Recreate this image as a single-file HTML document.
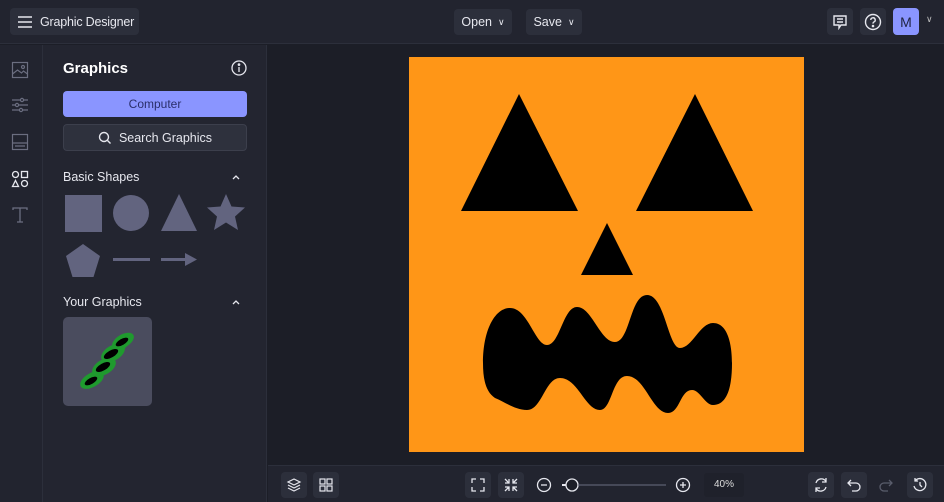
<!DOCTYPE html>
<html><head><style>
*{margin:0;padding:0;box-sizing:border-box}
body{width:944px;height:502px;background:#1c1e27;font-family:"Liberation Sans",sans-serif;color:#e6e7ee;position:relative;overflow:hidden}
.abs{position:absolute;white-space:nowrap}
.top{left:0;top:0;width:944px;height:44px;background:#22242f;border-bottom:1px solid #2c2f3b}
.btn{position:absolute;background:#2c2f3b;border-radius:4px;font-size:12.5px;color:#e6e7ee;display:flex;align-items:center;justify-content:center;white-space:nowrap}
.rail{left:0;top:45px;width:43px;height:457px;background:#22242f;border-right:1px solid #2c2f3b}
.panel{left:43px;top:45px;width:224px;height:457px;background:#232530;border-right:1px solid #2c2f3b}
.bot{left:268px;top:465px;width:676px;height:37px;background:#22242f;border-top:1px solid #2c2f3b}
.ib{position:absolute;width:26px;height:26px;background:#2c2f3b;border-radius:4px;display:flex;align-items:center;justify-content:center}
</style></head><body>
<div class="abs top"></div>
<div class="btn" style="left:10px;top:8px;width:129px;height:27px;justify-content:flex-start;padding-left:7px">
<svg width="16" height="14" viewBox="0 0 16 14" stroke="#e6e7ee" stroke-width="1.6"><path d="M1 2h14M1 7h14M1 12h14"/></svg><span style="margin-left:7px;letter-spacing:-0.2px">Graphic Designer</span></div>
<div class="btn" style="left:454px;top:9px;width:58px;height:26px">Open <span style="font-size:9px;margin-left:6px">&#8744;</span></div>
<div class="btn" style="left:526px;top:9px;width:56px;height:26px">Save <span style="font-size:9px;margin-left:6px">&#8744;</span></div>
<div class="btn" style="left:827px;top:8px;width:26px;height:27px"><svg width="16" height="16" viewBox="0 0 16 16" fill="none" stroke="#e6e7ee" stroke-width="1.4"><path d="M2 2h12v9H9l-2 3v-3H2z M5 5h6M5 8h6"/></svg></div>
<div class="btn" style="left:860px;top:8px;width:26px;height:27px"><svg width="18" height="18" viewBox="0 0 18 18" fill="none" stroke="#e6e7ee" stroke-width="1.4"><circle cx="9" cy="9" r="7.5"/><path d="M6.8 7a2.2 2.2 0 1 1 3 2c-.7.3-.8.8-.8 1.6"/><circle cx="9" cy="13" r=".6" fill="#e6e7ee"/></svg></div>
<div class="btn" style="left:893px;top:8px;width:26px;height:27px;background:#8a95ff;color:#1f2240;font-size:14px">M</div>
<div class="abs" style="left:926px;top:14px;font-size:9px;color:#bbb">&#8744;</div>

<div class="abs rail"></div>
<svg class="abs" style="left:11px;top:61px" width="18" height="18" viewBox="0 0 18 18" fill="none" stroke="#6b6e80" stroke-width="1.2"><rect x="1.5" y="1.5" width="15" height="15"/><path d="M1.5 13l5-4 4 3 2-2 4 3"/><circle cx="12" cy="6" r="1.5"/></svg>
<svg class="abs" style="left:11px;top:96px" width="18" height="18" viewBox="0 0 18 18" fill="none" stroke="#6b6e80" stroke-width="1.2"><path d="M1 4h16M1 9h16M1 14h16"/><circle cx="11" cy="4" r="1.6" fill="#22242f"/><circle cx="6" cy="9" r="1.6" fill="#22242f"/><circle cx="10" cy="14" r="1.6" fill="#22242f"/></svg>
<svg class="abs" style="left:11px;top:133px" width="18" height="18" viewBox="0 0 18 18" fill="none" stroke="#6b6e80" stroke-width="1.2"><rect x="1.5" y="1.5" width="15" height="15"/><path d="M1.5 10h15M4 13h10"/></svg>
<svg class="abs" style="left:11px;top:170px" width="18" height="18" viewBox="0 0 18 18" fill="none" stroke="#e6e7ee" stroke-width="1.3"><circle cx="4.5" cy="4.5" r="3"/><rect x="10.5" y="1.5" width="6" height="6"/><path d="M4.5 10.5l3 6h-6z"/><circle cx="13.5" cy="13.5" r="3"/></svg>
<svg class="abs" style="left:11px;top:206px" width="18" height="18" viewBox="0 0 18 18" fill="none" stroke="#6b6e80" stroke-width="1.3"><path d="M2 4V2h14v2M9 2v14M6 16h6"/></svg>

<div class="abs panel"></div>
<div class="abs" style="left:63px;top:60px;font-size:15px;font-weight:bold;color:#fff">Graphics</div>
<svg class="abs" style="left:231px;top:60px" width="16" height="16" viewBox="0 0 16 16" fill="none" stroke="#e6e7ee" stroke-width="1.3"><circle cx="8" cy="8" r="7"/><path d="M8 7v5"/><circle cx="8" cy="4.6" r=".7" fill="#e6e7ee"/></svg>
<div class="btn" style="left:63px;top:91px;width:184px;height:26px;background:#8a95ff;color:#2a2f6a;font-size:12px">Computer</div>
<div class="btn" style="left:63px;top:124px;width:184px;height:27px;background:#2e313d;border:1px solid #3c3f4c;font-size:12.5px"><svg width="14" height="14" viewBox="0 0 14 14" fill="none" stroke="#e6e7ee" stroke-width="1.4"><circle cx="6" cy="6" r="4.5"/><path d="M9.5 9.5l3 3"/></svg><span style="margin-left:7px">Search Graphics</span></div>
<div class="abs" style="left:63px;top:170px;font-size:12.5px">Basic Shapes</div>
<svg class="abs" style="left:231px;top:173px" width="10" height="8" fill="none" stroke="#e6e7ee" stroke-width="1.3"><path d="M2 6l3-3 3 3"/></svg>
<svg class="abs" style="left:63px;top:192px" width="190" height="90" fill="#62647f">
<rect x="2" y="3" width="37" height="37"/>
<circle cx="68" cy="21" r="18"/>
<path d="M116 2l18 37h-36z"/>
<path d="M163 2l5.5 12.5 13.5 1-10 9 3 13.5-12-7.5-12 7.5 3-13.5-10-9 13.5-1z"/>
<path d="M20 52l17 12-6.5 21h-21L3 64z"/>
<rect x="50" y="66" width="37" height="3"/>
<rect x="98" y="66" width="25" height="3"/><path d="M122 61l12 6.5-12 6.5z"/>
</svg>
<div class="abs" style="left:63px;top:295px;font-size:12.5px">Your Graphics</div>
<svg class="abs" style="left:231px;top:298px" width="10" height="8" fill="none" stroke="#e6e7ee" stroke-width="1.3"><path d="M2 6l3-3 3 3"/></svg>
<div class="abs" style="left:63px;top:317px;width:89px;height:89px;background:#4a4c5e;border-radius:5px"></div>
<svg class="abs" style="left:63px;top:317px" width="89" height="89"><g fill="#1f9a2e">
<path d="M25 68L64 22" stroke="#1f9a2e" stroke-width="9"/>
<ellipse cx="29" cy="63" rx="13" ry="7" transform="rotate(-30 29 63)"/>
<ellipse cx="41" cy="50" rx="13" ry="7.5" transform="rotate(-30 41 50)"/>
<ellipse cx="50" cy="36" rx="13" ry="7.5" transform="rotate(-30 50 36)"/>
<ellipse cx="60" cy="24" rx="12" ry="6.5" transform="rotate(-30 60 24)"/></g>
<ellipse cx="59" cy="25" rx="7" ry="3" fill="#000" transform="rotate(-30 59 25)"/>
<ellipse cx="48" cy="37" rx="8" ry="3.5" fill="#000" transform="rotate(-30 48 37)"/>
<ellipse cx="40" cy="50" rx="8" ry="3.5" fill="#000" transform="rotate(-30 40 50)"/>
<ellipse cx="28" cy="64" rx="7" ry="3" fill="#000" transform="rotate(-30 28 64)"/></svg>

<svg class="abs" style="left:0;top:0" width="944" height="502">
<rect x="409" y="57" width="395" height="395" fill="#ff9617"/>
<path d="M519 94L578 211H461z M695 94L753 211H636z M607 223L633 275H581z" fill="#000"/>
<path d="M483 363C483 330 495 308 510 308C528 308 535 345 547 345C560 345 563 307 577 307C592 307 600 342 615 342C630 342 630 295 647 295C665 295 668 348 680 348C692 348 700 323 713 323C728 323 732 345 732 363C732 385 728 405 713 405C705 405 700 390 692 390C680 390 680 413 668 413C652 413 645 376 627 376C612 376 612 410 600 410C585 410 578 378 560 378C545 378 542 410 527 410C515 410 505 402 495 398C486 392 483 380 483 363Z" fill="#000"/>
</svg>

<div class="abs bot"></div>
<div class="ib" style="left:281px;top:472px"><svg width="16" height="16" viewBox="0 0 16 16" fill="none" stroke="#e6e7ee" stroke-width="1.2"><path d="M8 2l6 3-6 3-6-3z M2 8l6 3 6-3 M2 11l6 3 6-3"/></svg></div>
<div class="ib" style="left:313px;top:472px"><svg width="14" height="14" viewBox="0 0 14 14" fill="none" stroke="#e6e7ee" stroke-width="1.2"><rect x="1" y="1" width="5" height="5"/><rect x="8" y="1" width="5" height="5"/><rect x="1" y="8" width="5" height="5"/><rect x="8" y="8" width="5" height="5"/></svg></div>
<div class="ib" style="left:465px;top:472px"><svg width="14" height="14" viewBox="0 0 14 14" fill="none" stroke="#e6e7ee" stroke-width="1.3"><path d="M1 5V1h4M9 1h4v4M13 9v4H9M5 13H1V9"/></svg></div>
<div class="ib" style="left:498px;top:472px"><svg width="14" height="14" viewBox="0 0 14 14" fill="none" stroke="#e6e7ee" stroke-width="1.3"><path d="M1 5h4V1M5 5L1 1M9 1v4h4M9 5l4-4M13 9H9v4M9 9l4 4M1 9h4v4M5 9l-4 4"/></svg></div>
<svg class="abs" style="left:536px;top:477px" width="160" height="16" fill="none" stroke="#e6e7ee" stroke-width="1.3"><circle cx="8" cy="8" r="6.5"/><path d="M5 8h6"/><path d="M26 8h8" stroke-width="2"/><circle cx="36" cy="8" r="6" fill="#1c1e27"/><path d="M42 8h88" stroke="#6b6e80" stroke-width="1"/><circle cx="147" cy="8" r="6.5"/><path d="M144 8h6M147 5v6"/></svg>
<div class="abs" style="left:704px;top:473px;width:40px;height:24px;background:#1f212b;border-radius:3px;font-size:10px;line-height:24px;text-align:center;color:#ddd">40%</div>
<div class="ib" style="left:808px;top:472px"><svg width="16" height="16" viewBox="0 0 16 16" fill="none" stroke="#e6e7ee" stroke-width="1.3"><path d="M3 6a5.5 5.5 0 0 1 10-1.5M13 10a5.5 5.5 0 0 1-10 1.5M13 1v4H9M3 15v-4h4"/></svg></div>
<div class="ib" style="left:841px;top:472px"><svg width="16" height="16" viewBox="0 0 16 16" fill="none" stroke="#e6e7ee" stroke-width="1.3"><path d="M5 3L2 6l3 3M2 6h8a4 4 0 0 1 0 8H6"/></svg></div>
<svg class="abs" style="left:878px;top:477px" width="16" height="16" viewBox="0 0 16 16" fill="none" stroke="#5a5d6c" stroke-width="1.3"><path d="M11 3l3 3-3 3M14 6H6a4 4 0 0 0 0 8h4"/></svg>
<div class="ib" style="left:907px;top:472px"><svg width="16" height="16" viewBox="0 0 16 16" fill="none" stroke="#e6e7ee" stroke-width="1.3"><path d="M3 4a6 6 0 1 1-1 5M3 1v3h3M8 5v3l2 2"/></svg></div>
</body></html>
